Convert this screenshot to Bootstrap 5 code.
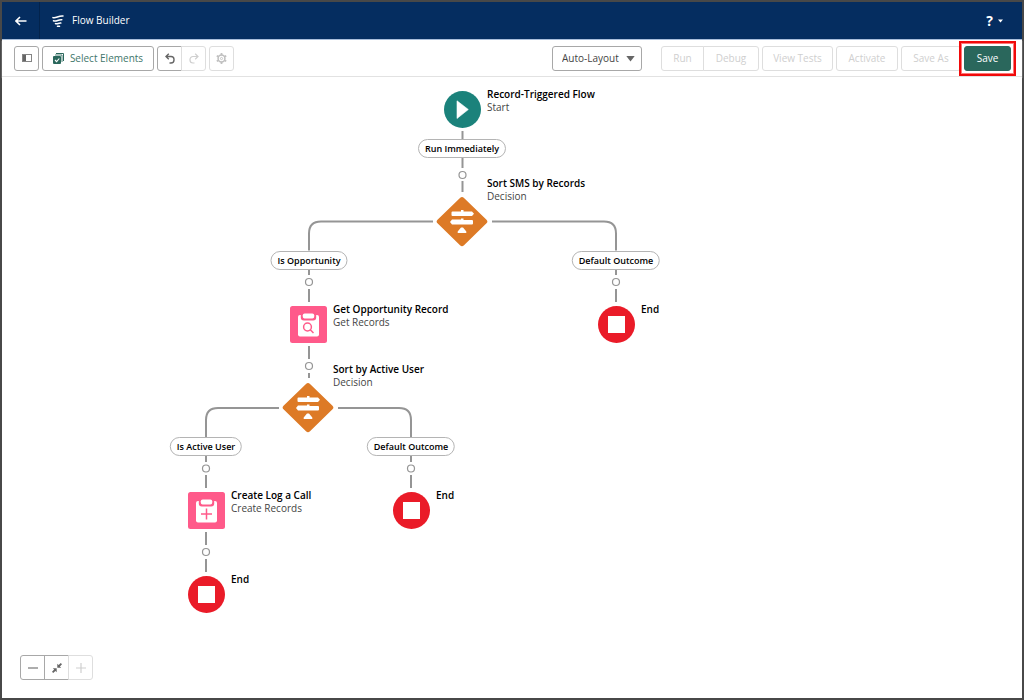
<!DOCTYPE html>
<html lang="en">
<head>
<meta charset="utf-8">
<meta name="viewport" content="width=device-width, initial-scale=1">
<title>Flow Builder</title>
<link href="https://cdn.jsdelivr.net/npm/bootstrap@5.3.0/dist/css/bootstrap.min.css" rel="stylesheet">
<style>
  body { font-family: "Open Sans", "Noto Sans", sans-serif; font-size: 10px; color: #181818; }
  .app-frame { border: 2px solid #484848; }
  .app-header { background: #052d60; height: 38px; border-bottom: 1px solid #a9bedb; font-size: 10px; }
  .back-link { width: 38px; border-right: 1px solid #03234c; }
  .help-btn { font-size: 14px; font-weight: 700; line-height: 18px; margin-right: 18px; }

  .toolbar-row { height: 37px; border-bottom: 1px solid #e2e2e2; box-shadow: 0 1px 1px #f1f1f1; gap: 3px; padding: 0 11px 0 12px; }
  .tool-btn { --bs-btn-font-size: 10px; --bs-btn-line-height: 15px; --bs-btn-padding-x: 0; --bs-btn-padding-y: 0;
    --bs-btn-color: #747474; --bs-btn-bg: #fff; --bs-btn-border-color: #a8a8a8; --bs-btn-border-radius: 3px;
    --bs-btn-disabled-color: #cfcfcf; --bs-btn-disabled-bg: #fff; --bs-btn-disabled-border-color: #dedede; --bs-btn-disabled-opacity: 1;
    display: inline-flex; align-items: center; justify-content: center; height: 25px; white-space: nowrap; }
  .tool-icon { width: 25px; flex: 0 0 auto; }
  .tool-elements { --bs-btn-color: #3f766b; width: 112px; gap: 6px; }
  .w-run { width: 43px; } .w-debug { width: 56px; } .w-tests { width: 71px; }
  .w-activate { width: 62px; } .w-saveas { width: 60px; }
  .save-btn { --bs-btn-color: #fff; --bs-btn-bg: #2a675c; --bs-btn-border-color: #2a675c; width: 47px; }
  .save-mark { inset: -5px; border: 2px solid #f00a0a; outline: 1px solid #f77; outline-offset: -3px; pointer-events: none; }
  .save-wrap::before { content: ""; position: absolute; inset: -3px; background: #fff; }
  .layout-select { --bs-form-select-bg-img: none; width: 90px; height: 25px; padding: 0 20px 0 9px; font-size: 10px; line-height: 15px;
    color: #444; border: 1px solid #a8a8a8; border-radius: 3px; background-image: none; }
  .select-arrow { right: 7px; top: 9px; pointer-events: none; }

  .flow-canvas { min-height: 500px; overflow: hidden; }
  .flow-lines { left: 0; top: 0; }
  .flow-node { display: flex; gap: 6px; position: absolute; line-height: 13px; white-space: nowrap; }
  .flow-node svg { flex: none; margin-top: 3px; }
  .flow-node.is-decision { flex-direction: column; gap: 0; }
  .flow-node.is-decision svg { margin-top: -7px; }
  .flow-node.is-decision .node-text { margin-left: 51px; }
  .node-title { font-size: 10px; font-weight: 600; color: #000; }
  .node-kind { font-size: 10px; color: #444; }
  .flow-pill { position: absolute; transform: translateX(-50%); height: 19px; padding: 0 6px; border: 1px solid #b4b4b4; border-radius: 10px;
    background: #fff; font-size: 9px; line-height: 17px; font-weight: 600; white-space: nowrap; color: #000; }

  /* Positions on the canvas */
  #n-start { left: 442px; top: 11px; }
  #n-sort-sms { left: 434px; top: 100px; }
  #n-get { left: 288px; top: 226px; }
  #n-end-a { left: 596px; top: 226px; }
  #n-sort-user { left: 280px; top: 286px; }
  #n-create { left: 186px; top: 412px; }
  #n-end-b { left: 391px; top: 412px; }
  #n-end-c { left: 186px; top: 496px; }
  #p-run { left: 460px; top: 62px; }
  #p-opp { left: 307px; top: 174px; }
  #p-def-a { left: 614px; top: 174px; }
  #p-user { left: 204px; top: 360px; }
  #p-def-b { left: 409px; top: 360px; }

  .zoom-group { left: 18px; bottom: 18px; }
</style>
</head>
<body>
<svg width="0" height="0" class="position-absolute" aria-hidden="true">
  <defs>
    <symbol id="i-decision" viewBox="0 0 52 52">
      <path d="M24 1.900Q26 -.1 28 1.900L50.500 23.700Q52.300 25.500 50.500 27.300L28 49.300Q26 51.300 24 49.300L1.500 27.300Q-.3 25.500 1.500 23.700Z" fill="#dd7a26"/>
      <path d="M25 14h2.500v1.500h8.500l2 2.300-2 2.300h-19.500q-1 0-1-1v-2.600q0-1 1-1h8.500zM25 22.500h2.500v1.500h8.500q1 0 1 1v2.600q0 1-1 1h-20l-2-2.500 2-2.600h9zM25 31.500h2l3.300 4v1.500h-8.600v-1.500z" fill="#fff"/>
    </symbol>
    <symbol id="i-end" viewBox="0 0 37 37">
      <circle cx="18.500" cy="18.500" r="18.500" fill="#ea1b28"/>
      <rect x="10" y="10" width="17" height="17" fill="#fff"/>
    </symbol>
    <symbol id="i-clip" viewBox="0 0 37 37">
      <rect width="37" height="37" rx="2.500" fill="#ff5a8a"/>
      <rect x="8" y="9" width="21" height="21.500" rx="2" fill="#fff"/>
      <path d="M10.800 6h15.400v5.500q0 3-3 3h-9.400q-3 0-3-3z" fill="#ff5a8a"/>
      <rect x="12.800" y="7.500" width="11.400" height="5" rx="1.800" fill="#fff"/>
    </symbol>
  </defs>
</svg>

<div class="app-frame d-flex flex-column min-vh-100">
  <header class="app-header d-flex align-items-stretch text-white">
    <a href="#" class="back-link d-flex align-items-center justify-content-center text-white" aria-label="Back">
      <svg width="12" height="10" viewBox="0 0 12 10" fill="none" stroke="#fff" stroke-width="1.600"><path d="M11.500 5H1.200M5 1 1 5l4 4"/></svg>
    </a>
    <div class="d-flex align-items-center ps-2 ms-1">
      <svg width="12" height="12" viewBox="0 0 12 12" fill="none" stroke="#fff" stroke-width="1.500" stroke-linecap="round"><path d="M1 2.600C4 3.600 6.500.4 11 1M1.500 5.800C4.500 7 6 4.300 9.800 4.700M3.500 8.600C5.500 9.600 6.300 7.800 8.800 8.100M5.500 11.300h2"/></svg>
      <span class="ms-2">Flow Builder</span>
    </div>
    <button type="button" class="help-btn btn p-0 border-0 text-white ms-auto d-flex align-items-center" aria-label="Help">
      <span>?</span><svg class="ms-1" width="7" height="4" viewBox="0 0 7 4" fill="#fff"><path d="M1 .5h5L3.500 3.500z"/></svg>
    </button>
  </header>

  <div class="toolbar-row d-flex align-items-center" role="toolbar" aria-label="Flow tools">
    <button type="button" class="btn tool-btn tool-icon" aria-label="Toggle panel">
      <svg width="10" height="8" viewBox="0 0 10 8"><rect x=".5" y=".5" width="9" height="7" fill="none" stroke="#858585"/><rect x="1" y="1" width="3" height="6" fill="#666"/></svg>
    </button>
    <button type="button" class="btn tool-btn tool-elements">
      <svg width="11" height="11" viewBox="0 0 11 11"><path d="M3 .5h7.500V8" fill="none" stroke="#2a675c" stroke-width="1"/><path d="M2 2h7v7" fill="none" stroke="#2a675c" stroke-width=".8"/><rect x="0" y="3" width="8" height="8" rx="1" fill="#2a675c"/><path d="m2 7 1.600 1.600L6.300 5.500" fill="none" stroke="#fff" stroke-width="1.100"/></svg>
      <span>Select Elements</span>
    </button>
    <div class="btn-group">
      <button type="button" class="btn tool-btn tool-icon" aria-label="Undo">
        <svg width="10" height="11" viewBox="0 0 10 11" fill="none" stroke="#666" stroke-width="1.400"><path d="M3.800.8 1 3.500l2.800 2.700M1 3.500h5a3 3 0 0 1 3 3v.5a3 3 0 0 1-3 3H4.500"/></svg>
      </button>
      <button type="button" class="btn tool-btn tool-icon" aria-label="Redo" disabled>
        <svg width="10" height="11" viewBox="0 0 10 11" fill="none" stroke="#cfcfcf" stroke-width="1.200"><path d="M6.200.8 9 3.500 6.200 6.200M9 3.500H4a3 3 0 0 0-3 3v.5a3 3 0 0 0 3 3h1.500"/></svg>
      </button>
    </div>
    <button type="button" class="btn tool-btn tool-icon" aria-label="Settings" disabled>
      <svg width="11" height="11" viewBox="0 0 10 10" fill="none" stroke="#c0c0c0"><circle cx="5" cy="5" r="3.100" stroke-width="1.400"/><circle cx="5" cy="5" r="1" stroke-width=".8"/><path d="M5 0v2M5 8v2M.7 2.500l1.700 1M7.600 6.500l1.700 1M.7 7.500l1.700-1M7.600 3.500l1.700-1" stroke-width="1.600"/></svg>
    </button>

    <div class="ms-auto me-3 position-relative">
      <select class="form-select layout-select" aria-label="Layout mode"><option>Auto-Layout</option><option>Free-Form</option></select>
      <svg class="select-arrow position-absolute" width="9" height="7" viewBox="0 0 9 7" fill="#666"><path d="M.3 1h8.400L4.500 6.500z"/></svg>
    </div>
    <div class="btn-group">
      <button type="button" class="btn tool-btn w-run" disabled>Run</button>
      <button type="button" class="btn tool-btn w-debug" disabled>Debug</button>
    </div>
    <button type="button" class="btn tool-btn w-tests" disabled>View Tests</button>
    <button type="button" class="btn tool-btn w-activate" disabled>Activate</button>
    <button type="button" class="btn tool-btn w-saveas" disabled>Save As</button>
    <div class="save-wrap position-relative">
      <button type="button" class="btn tool-btn save-btn position-relative">Save</button>
      <span class="save-mark position-absolute"></span>
    </div>
  </div>

  <main class="flow-canvas flex-grow-1 position-relative bg-white">
    <svg class="flow-lines position-absolute w-100 h-100" fill="none" stroke="#959595" stroke-width="2" aria-hidden="true">
      <path d="M460.500 54v8M460.500 81v10M460.500 104v11"/>
      <path d="M431 144.500H319q-12 0-12 12v17M490 144.500h112q12 0 12 12v17"/>
      <path d="M307 193v5M307 212v13M307 269v13M307 296v5M614 193v5M614 212v13"/>
      <path d="M277 331H216q-12 0-12 12v17M336 331h61q12 0 12 12v17"/>
      <path d="M204 379v6M204 398v13M204 455v13M204 482v13M409 379v6M409 398v13"/>
      <g stroke-width="1.200">
        <circle cx="460.500" cy="98" r="3.500"/><circle cx="307" cy="205" r="3.500"/><circle cx="307" cy="289" r="3.500"/><circle cx="614" cy="205" r="3.500"/>
        <circle cx="204" cy="391.500" r="3.500"/><circle cx="204" cy="475" r="3.500"/><circle cx="409" cy="391.500" r="3.500"/>
      </g>
    </svg>

    <div class="flow-node" id="n-start">
      <svg width="37" height="37" viewBox="0 0 37 37"><circle cx="18.500" cy="18.500" r="18.500" fill="#1b827b"/><path d="M13 9.800 24.300 18.500 13 27.500z" fill="#fff" stroke="#fff" stroke-width=".6" stroke-linejoin="round"/></svg>
      <div class="node-text"><div class="node-title">Record-Triggered Flow</div><div class="node-kind">Start</div></div>
    </div>
    <div class="flow-pill" id="p-run">Run Immediately</div>

    <div class="flow-node is-decision" id="n-sort-sms">
      <div class="node-text"><div class="node-title">Sort SMS by Records</div><div class="node-kind">Decision</div></div>
      <svg width="52" height="52"><use href="#i-decision"/></svg>
    </div>
    <div class="flow-pill" id="p-opp">Is Opportunity</div>
    <div class="flow-pill" id="p-def-a">Default Outcome</div>

    <div class="flow-node" id="n-get">
      <svg width="37" height="37" viewBox="0 0 37 37"><use href="#i-clip"/><g fill="none" stroke="#ff5a8a" stroke-width="1.500"><circle cx="17.500" cy="21" r="3.900"/><path d="m20.300 23.800 3.200 3.200"/></g></svg>
      <div class="node-text"><div class="node-title">Get Opportunity Record</div><div class="node-kind">Get Records</div></div>
    </div>
    <div class="flow-node" id="n-end-a">
      <svg width="37" height="37"><use href="#i-end"/></svg>
      <div class="node-text"><div class="node-title">End</div></div>
    </div>

    <div class="flow-node is-decision" id="n-sort-user">
      <div class="node-text"><div class="node-title">Sort by Active User</div><div class="node-kind">Decision</div></div>
      <svg width="52" height="52"><use href="#i-decision"/></svg>
    </div>
    <div class="flow-pill" id="p-user">Is Active User</div>
    <div class="flow-pill" id="p-def-b">Default Outcome</div>

    <div class="flow-node" id="n-create">
      <svg width="37" height="37" viewBox="0 0 37 37"><use href="#i-clip"/><path d="M18.500 16.500v11M13 22h11" stroke="#ff5a8a" stroke-width="1.500"/></svg>
      <div class="node-text"><div class="node-title">Create Log a Call</div><div class="node-kind">Create Records</div></div>
    </div>
    <div class="flow-node" id="n-end-b">
      <svg width="37" height="37"><use href="#i-end"/></svg>
      <div class="node-text"><div class="node-title">End</div></div>
    </div>
    <div class="flow-node" id="n-end-c">
      <svg width="37" height="37"><use href="#i-end"/></svg>
      <div class="node-text"><div class="node-title">End</div></div>
    </div>

    <div class="zoom-group btn-group position-absolute" role="group" aria-label="Zoom">
      <button type="button" class="btn tool-btn tool-icon" aria-label="Zoom out"><svg width="10" height="10" viewBox="0 0 10 10"><path d="M0 5h10" stroke="#999" stroke-width="1.600"/></svg></button>
      <button type="button" class="btn tool-btn tool-icon" aria-label="Zoom to fit"><svg width="10" height="10" viewBox="0 0 10 10" fill="#666"><path d="M5.300.8v3.900h3.900L7.900 3.500 10 1.200 8.800 0 6.600 2.100zM4.700 9.200V5.300H.8l1.300 1.200L0 8.800 1.200 10l2.200-2.100z"/></svg></button>
      <button type="button" class="btn tool-btn tool-icon" aria-label="Zoom in" disabled><svg width="10" height="10" viewBox="0 0 10 10"><path d="M0 5h10M5 0v10" stroke="#cfcfcf" stroke-width="1.200"/></svg></button>
    </div>
  </main>
</div>
<script src="https://cdn.jsdelivr.net/npm/bootstrap@5.3.0/dist/js/bootstrap.bundle.min.js"></script>
</body>
</html>
